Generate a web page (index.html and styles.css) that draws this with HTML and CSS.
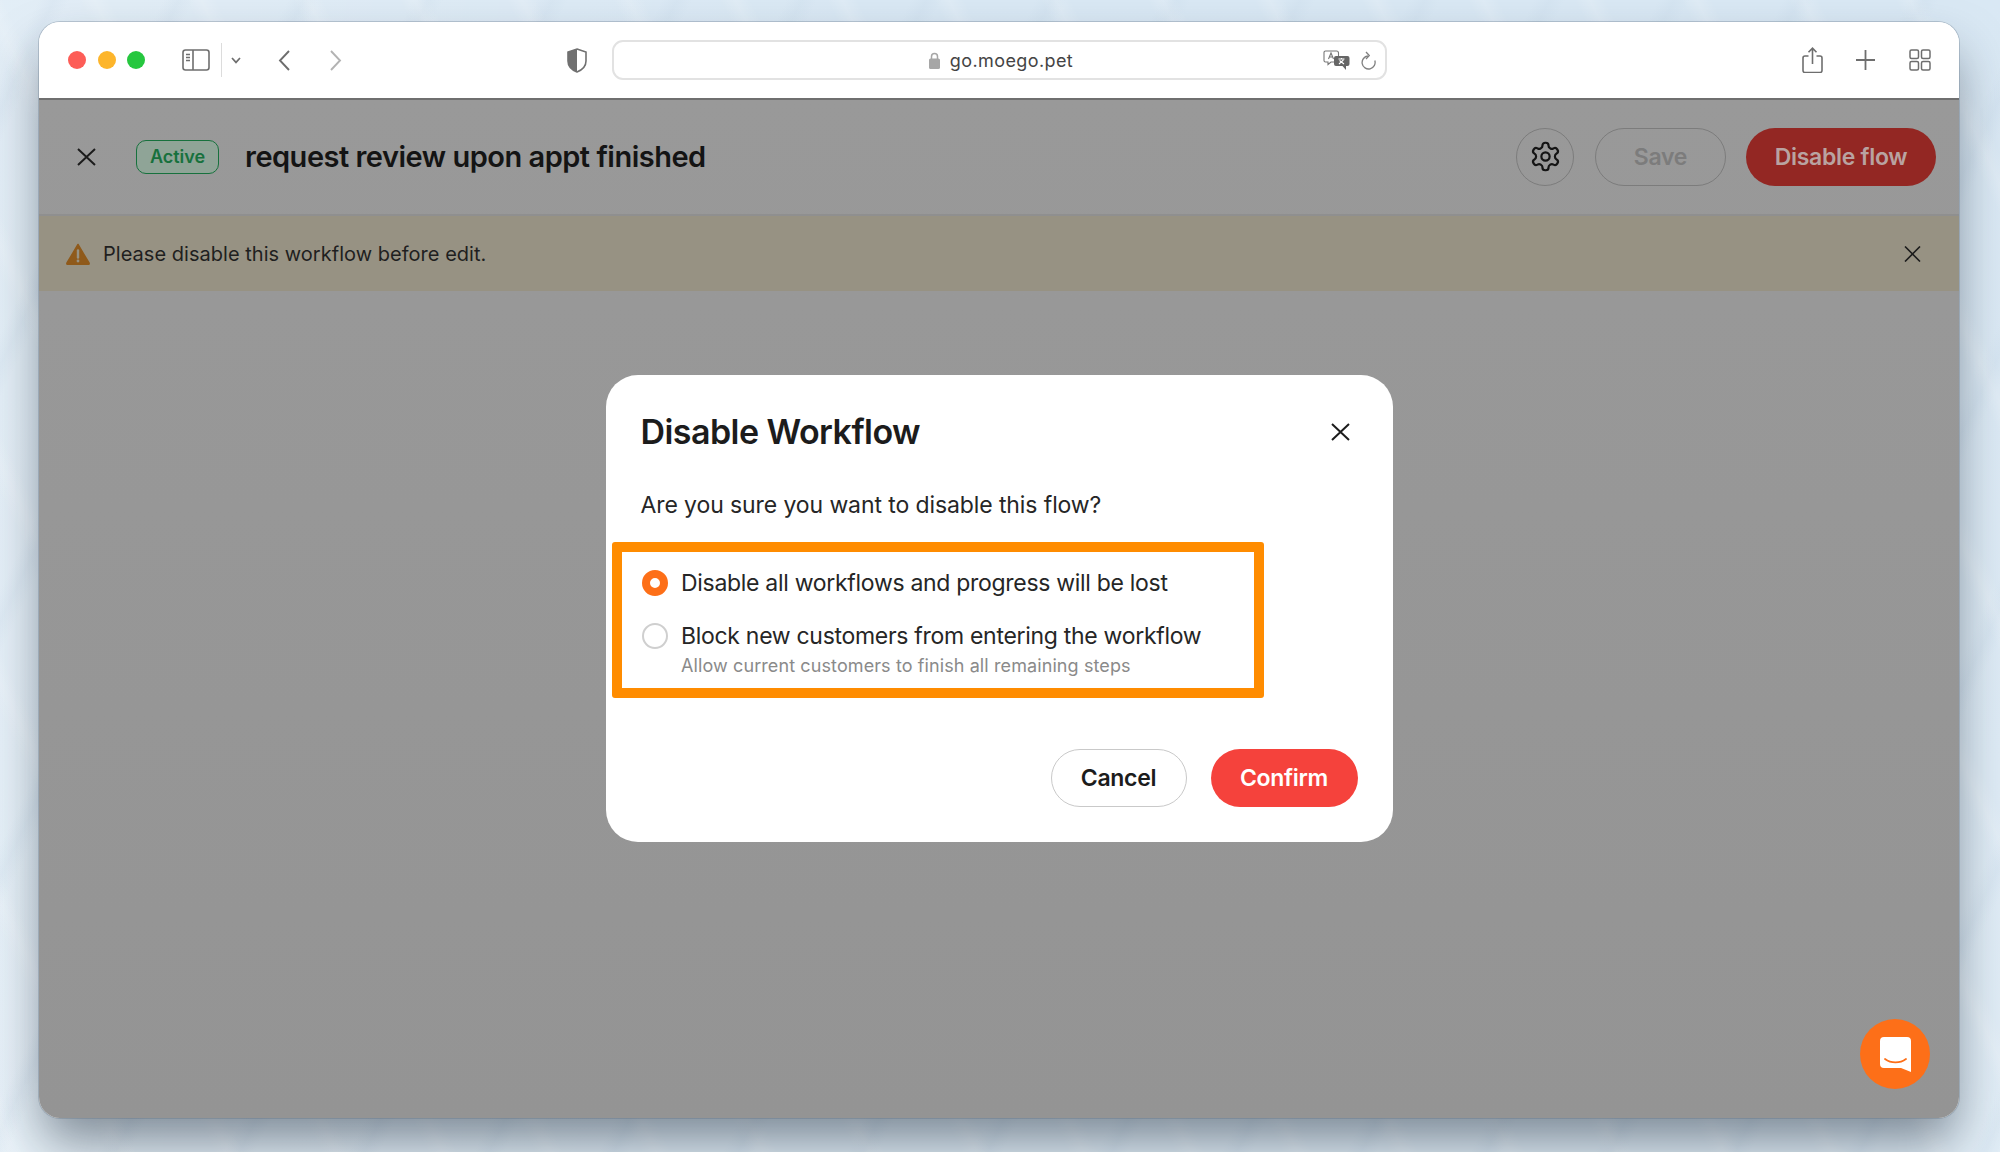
FILE: index.html
```html
<!DOCTYPE html>
<html lang="en">
<head>
  <meta charset="UTF-8">
  <title>Disable Workflow | MoeGo</title>
  <link rel="stylesheet" href="styles.css">
</head>
<body>
  <div class="window">
    <div class="toolbar">
      <div class="lights">
        <span class="light red"></span>
        <span class="light yellow"></span>
        <span class="light green"></span>
      </div>
      <svg class="tb-sidebar" width="28" height="22" viewBox="0 0 28 22" fill="none" stroke="#6e6e6e" stroke-width="1.6">
        <rect x="1" y="1" width="26" height="20" rx="2.5"/>
        <path d="M11 1v20"/>
        <path d="M4 5.5h4M4 8.5h4M4 11.5h4" stroke-width="1.3"/>
      </svg>
      <span class="tb-divider"></span>
      <svg class="tb-chevron" width="10" height="7" viewBox="0 0 10 7" fill="none" stroke="#6e6e6e" stroke-width="1.7">
        <path d="M1 1l4 4.4L9 1"/>
      </svg>
      <svg class="tb-back" width="12" height="21" viewBox="0 0 12 21" fill="none" stroke="#6e6e6e" stroke-width="1.9">
        <path d="M11 1L2 10.5 11 20"/>
      </svg>
      <svg class="tb-forward" width="12" height="21" viewBox="0 0 12 21" fill="none" stroke="#b3b3b3" stroke-width="1.9">
        <path d="M1 1l9 9.5L1 20"/>
      </svg>
      <svg class="tb-shield" width="20" height="25" viewBox="0 0 20 25">
        <path d="M10 1L1 4v9c0 5 4 9 9 11z" fill="#707070"/>
        <path d="M10 1l9 3v9c0 5-4 9-9 11C5 22 1 18 1 13V4z" fill="none" stroke="#707070" stroke-width="1.6"/>
      </svg>
      <div class="urlbar">
        <div class="url">
          <svg width="11" height="17" viewBox="0 0 11 17">
            <path d="M2.5 7V4.5a3 3 0 0 1 6 0V7" fill="none" stroke="#a6a6a6" stroke-width="1.5"/>
            <rect y="6.5" width="11" height="10.5" rx="1.6" fill="#a6a6a6"/>
          </svg>
          <span>go.moego.pet</span>
        </div>
        <svg class="url-translate" width="27" height="20" viewBox="0 0 27 20">
          <path d="M2.500 1h11a2 2 0 0 1 2 2v7a2 2 0 0 1-2 2H8l-3 2.500V12H2.500a1.500 1.500 0 0 1-1.500-1.500V2.500A1.500 1.500 0 0 1 2.500 1z" fill="#fff" stroke="#777" stroke-width="1.100"/>
          <path d="M5.500 9l2.500-6 2.500 6M6.500 7h3" fill="none" stroke="#777" stroke-width="1.100"/>
          <path d="M13 6h11.500a2 2 0 0 1 2 2v6a2 2 0 0 1-2 2H23v4l-3.500-4H13a2 2 0 0 1-2-2V8a2 2 0 0 1 2-2z" fill="#666"/>
          <path d="M15.500 9h6M18.500 8v1.500M16 14l4.500-4.200M16.500 10.500l4.500 3.500" fill="none" stroke="#fff" stroke-width="1.100"/>
        </svg>
        <svg class="url-reload" width="15" height="19" viewBox="0 0 15 19" fill="none" stroke="#808080" stroke-width="1.300">
          <path d="M7 5A6.500 6.500 0 1 0 13.800 9.500"/>
          <path d="M5 1l3.300 3.600L5 8"/>
        </svg>
      </div>
      <svg class="tb-share" width="21" height="26" viewBox="0 0 21 26" fill="none" stroke="#6e6e6e" stroke-width="1.600">
        <path d="M6.500 9H3a2 2 0 0 0-2 2v12.500a2 2 0 0 0 2 2h15a2 2 0 0 0 2-2V11a2 2 0 0 0-2-2h-3.500"/>
        <path d="M10.500 17V1.500M6.500 5.200l4-4 4 4"/>
      </svg>
      <svg class="tb-plus" width="19" height="20" viewBox="0 0 19 20" fill="none" stroke="#6e6e6e" stroke-width="1.800">
        <path d="M9.500 0v20M0 10h19"/>
      </svg>
      <svg class="tb-tabs" width="22" height="22" viewBox="0 0 22 22" fill="none" stroke="#6e6e6e" stroke-width="1.500">
        <rect x="1" y="1" width="8.500" height="8.500" rx="1.500"/>
        <rect x="12.500" y="1" width="8.500" height="8.500" rx="1.500"/>
        <rect x="1" y="12.500" width="8.500" height="8.500" rx="1.500"/>
        <rect x="12.500" y="12.500" width="8.500" height="8.500" rx="1.500"/>
      </svg>
    </div>

    <div class="content">
      <div class="page-head">
        <svg class="icon-x head-close" width="19" height="18" viewBox="0 0 19 18" stroke="#1c1c1c" stroke-width="2">
          <path d="M1 1l17 16M18 1L1 17"/>
        </svg>
        <span class="tag">Active</span>
        <h1 class="page-title">request review upon appt finished</h1>
        <button class="btn-gear">
          <svg width="33" height="33" viewBox="0 0 24 24" fill="none" stroke="#151515" stroke-width="1.600" stroke-linejoin="round">
            <path d="M12.220 2h-.44a2 2 0 0 0-2 2v.18a2 2 0 0 1-1 1.730l-.43.25a2 2 0 0 1-2 0l-.15-.08a2 2 0 0 0-2.730.73l-.22.38a2 2 0 0 0 .73 2.730l.15.1a2 2 0 0 1 1 1.720v.51a2 2 0 0 1-1 1.740l-.15.09a2 2 0 0 0-.73 2.730l.22.38a2 2 0 0 0 2.730.73l.15-.08a2 2 0 0 1 2 0l.43.25a2 2 0 0 1 1 1.730V20a2 2 0 0 0 2 2h.44a2 2 0 0 0 2-2v-.18a2 2 0 0 1 1-1.730l.43-.25a2 2 0 0 1 2 0l.15.08a2 2 0 0 0 2.730-.73l.22-.39a2 2 0 0 0-.73-2.730l-.15-.08a2 2 0 0 1-1-1.740v-.5a2 2 0 0 1 1-1.740l.15-.09a2 2 0 0 0 .73-2.730l-.22-.38a2 2 0 0 0-2.730-.73l-.15.08a2 2 0 0 1-2 0l-.43-.25a2 2 0 0 1-1-1.730V4a2 2 0 0 0-2-2z"/>
            <circle cx="12" cy="12" r="3"/>
          </svg>
        </button>
        <button class="btn btn-save">Save</button>
        <button class="btn btn-disable">Disable flow</button>
      </div>

      <div class="banner">
        <svg class="banner-icon" width="24" height="22" viewBox="0 0 24 22">
          <path d="M12 1.500L23 20a1 1 0 0 1-.9 1.500H1.900A1 1 0 0 1 1 20z" fill="#8f5a1b" stroke="#8f5a1b" stroke-width="1.500" stroke-linejoin="round"/>
          <path d="M12 7.500v7" stroke="#979283" stroke-width="2.400" stroke-linecap="round"/>
          <circle cx="12" cy="18" r="1.400" fill="#979283"/>
        </svg>
        <span class="banner-text">Please disable this workflow before edit.</span>
        <svg class="icon-x banner-close" width="17" height="16" viewBox="0 0 17 16" stroke="#1c1c1c" stroke-width="1.600">
          <path d="M1 .5l15 15M16 .5l-15 15"/>
        </svg>
      </div>

      <div class="overlay">
        <div class="modal">
          <div class="modal-head">
            <h2 class="modal-title">Disable Workflow</h2>
            <svg class="icon-x" width="19" height="18" viewBox="0 0 19 18" stroke="#1c1c1c" stroke-width="2">
              <path d="M1 1l17 16M18 1L1 17"/>
            </svg>
          </div>
          <p class="modal-text">Are you sure you want to disable this flow?</p>
          <div class="options">
            <div class="option">
              <span class="radio checked"></span>
              <span class="option-label">Disable all workflows and progress will be lost</span>
            </div>
            <div class="option option-second">
              <span class="radio"></span>
              <span class="option-label">Block new customers from entering the workflow</span>
            </div>
            <div class="option-hint">Allow current customers to finish all remaining steps</div>
          </div>
          <div class="modal-foot">
            <button class="btn btn-cancel">Cancel</button>
            <button class="btn btn-confirm">Confirm</button>
          </div>
        </div>
      </div>

      <div class="chat">
        <svg width="31" height="35" viewBox="0 0 31 35">
          <path d="M4 0h23a4 4 0 0 1 4 4v31l-10-4H4a4 4 0 0 1-4-4V4a4 4 0 0 1 4-4z" fill="#fff"/>
          <path d="M5 22c6 4.500 15 4.500 21 0" fill="none" stroke="#fd6f18" stroke-width="1.800" stroke-linecap="round"/>
        </svg>
      </div>
    </div>
  </div>
</body>
</html>
```

FILE: styles.css
```css
* { box-sizing: border-box; }
html, body { margin: 0; height: 100%; }
body {
  font-family: Inter, "Noto Sans", sans-serif;
  width: 2000px;
  height: 1152px;
  padding: 22px 41px 34px 39px;
  overflow: hidden;
  background:
    repeating-linear-gradient(64deg, rgba(255,255,255,0) 0, rgba(255,255,255,.16) 14px, rgba(255,255,255,0) 28px, rgba(255,255,255,0) 96px),
    repeating-linear-gradient(-64deg, rgba(190,210,228,0) 0, rgba(190,210,228,.16) 14px, rgba(190,210,228,0) 28px, rgba(190,210,228,0) 112px),
    linear-gradient(100deg, rgba(255,255,255,.25), rgba(255,255,255,0) 40%),
    linear-gradient(180deg, #d9e8f4, #e2eef7);
  color: #1c1c1c;
}
h1, h2, p { margin: 0; }
button { font-family: inherit; cursor: pointer; }

.window {
  height: 1096px;
  border-radius: 21px;
  overflow: hidden;
  display: flex;
  flex-direction: column;
  background: #fff;
  box-shadow: 0 0 0 1px rgba(90,110,130,.3), 0 28px 50px -4px rgba(25,40,55,.5);
}

/* safari toolbar */
.toolbar {
  height: 78px;
  flex: none;
  display: flex;
  align-items: center;
  padding-left: 29px;
  background: #fff;
  border-bottom: 2px solid #6f6f6f;
}
.toolbar svg { flex: none; }
.lights { display: flex; gap: 11.500px; }
.light { width: 18px; height: 18px; border-radius: 50%; }
.red { background: #fd5d57; }
.yellow { background: #fdb52b; }
.green { background: #26c73f; }
.tb-sidebar { margin-left: 37px; }
.tb-divider { width: 1px; height: 34px; background: #dcdcdc; margin-left: 11px; }
.tb-chevron { margin-left: 9px; }
.tb-back { margin-left: 37px; }
.tb-forward { margin-left: 40px; }
.tb-shield { margin-left: 225px; }
.urlbar {
  width: 775px;
  height: 40px;
  margin-left: 25px;
  border: 2px solid #e2e2e2;
  border-radius: 11px;
  display: flex;
  align-items: center;
  padding-right: 9px;
}
.url {
  flex: 1;
  display: flex;
  align-items: center;
  justify-content: center;
  gap: 10px;
  padding: 1px 0 0 65px;
  font-size: 18px;
  letter-spacing: .4px;
  color: #444;
}
.url-translate { margin-right: 11px; }
.tb-share { margin-left: 415px; }
.tb-plus { margin-left: 33px; }
.tb-tabs { margin-left: 34px; }

/* dimmed page behind the dialog */
.content {
  flex: 1;
  position: relative;
  display: flex;
  flex-direction: column;
  background: linear-gradient(180deg, #999, #949494);
}
.page-head {
  height: 116px;
  flex: none;
  display: flex;
  align-items: center;
  padding: 0 23px 1px 38px;
  border-bottom: 2px solid #8f8f8f;
}
.head-close { flex: none; }
.tag {
  margin-left: 40px;
  width: 83px;
  height: 34px;
  border: 1.500px solid #17713d;
  border-radius: 10px;
  background: #8fa497;
  color: #17713d;
  font-size: 18px;
  font-weight: 600;
  display: flex;
  align-items: center;
  justify-content: center;
}
.page-title {
  margin-left: 26px;
  flex: 1;
  font-size: 29px;
  font-weight: 600;
  letter-spacing: -.5px;
  color: #141414;
}
.btn-gear {
  width: 58px;
  height: 58px;
  border-radius: 50%;
  border: 1.500px solid #7c7c7c;
  background: transparent;
  padding: 0;
  display: flex;
  align-items: center;
  justify-content: center;
}
.btn {
  height: 58px;
  border-radius: 29px;
  font-size: 23px;
  font-weight: 600;
  letter-spacing: -.3px;
  padding: 0;
}
.btn-save {
  width: 131px;
  margin-left: 21px;
  background: transparent;
  border: 1.500px solid #7c7c7c;
  color: #7c7c7c;
}
.btn-disable {
  width: 190px;
  margin-left: 20px;
  background: #932723;
  border: none;
  color: #b9a3a1;
}
.banner {
  height: 75px;
  flex: none;
  display: flex;
  align-items: center;
  padding: 0 38px 0 27px;
  background: #979283;
}
.banner-text { margin-left: 13px; flex: 1; font-size: 20px; letter-spacing: .03px; color: #1f1f1f; }

.overlay {
  position: absolute;
  inset: 0 0 2px 0;
  display: flex;
  align-items: center;
  justify-content: center;
}
.modal {
  width: 787px;
  height: 467px;
  background: #fff;
  border-radius: 32px;
  padding: 0 35px;
  display: flex;
  flex-direction: column;
}
.modal-head {
  height: 114px;
  flex: none;
  display: flex;
  align-items: center;
  justify-content: space-between;
  padding-right: 8px;
}
.modal-title { font-size: 34px; font-weight: 600; letter-spacing: -.55px; color: #1c1c1c; }
.modal-text { font-size: 23px; letter-spacing: -.1px; line-height: 32px; color: #262626; }
.options {
  margin: 21px 0 0 -29px;
  width: 652px;
  height: 156px;
  border: 10px solid #ff8c00;
  border-radius: 3px;
  padding: 18px 0 0 20px;
}
.option { display: flex; align-items: center; height: 26px; gap: 13.500px; }
.option-second { margin-top: 27px; }
.option-label { font-size: 23px; letter-spacing: -.3px; color: #262626; }
.radio {
  flex: none;
  width: 26px;
  height: 26px;
  border-radius: 50%;
  border: 2px solid #cfcfcf;
  background: #fff;
}
.radio.checked { border: 8.500px solid #fd6f18; }
.option-hint {
  margin: 5px 0 0 39.500px;
  font-size: 18px;
  line-height: 24px;
  letter-spacing: .1px;
  color: #8a8a8a;
}
.modal-foot {
  margin-top: auto;
  padding-bottom: 35px;
  display: flex;
  justify-content: flex-end;
  gap: 24px;
}
.btn-cancel {
  width: 136px;
  background: #fff;
  border: 1.500px solid #c9c9c9;
  color: #1c1c1c;
}
.btn-confirm {
  width: 147px;
  background: #f5423c;
  border: none;
  color: #fff;
}

.chat {
  position: absolute;
  right: 29px;
  bottom: 29px;
  width: 70px;
  height: 70px;
  border-radius: 50%;
  background: #fd6f18;
  display: flex;
  align-items: center;
  justify-content: center;
}
```
